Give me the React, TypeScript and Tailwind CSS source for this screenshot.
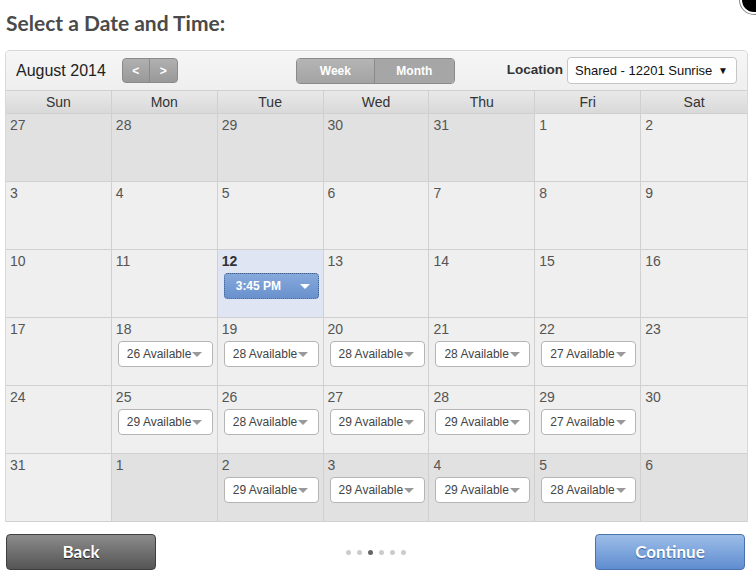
import React from "react";

// ── Data ──────────────────────────────────────────────────────

type Day = {
  n: number;
  other?: boolean;
  today?: boolean;
  avail?: number;
  time?: string;
};

const weeks: Day[][] = [
  [
    { n: 27, other: true },
    { n: 28, other: true },
    { n: 29, other: true },
    { n: 30, other: true },
    { n: 31, other: true },
    { n: 1 },
    { n: 2 },
  ],
  [{ n: 3 }, { n: 4 }, { n: 5 }, { n: 6 }, { n: 7 }, { n: 8 }, { n: 9 }],
  [
    { n: 10 },
    { n: 11 },
    { n: 12, today: true, time: "3:45 PM" },
    { n: 13 },
    { n: 14 },
    { n: 15 },
    { n: 16 },
  ],
  [
    { n: 17 },
    { n: 18, avail: 26 },
    { n: 19, avail: 28 },
    { n: 20, avail: 28 },
    { n: 21, avail: 28 },
    { n: 22, avail: 27 },
    { n: 23 },
  ],
  [
    { n: 24 },
    { n: 25, avail: 29 },
    { n: 26, avail: 28 },
    { n: 27, avail: 29 },
    { n: 28, avail: 29 },
    { n: 29, avail: 27 },
    { n: 30 },
  ],
  [
    { n: 31 },
    { n: 1, other: true },
    { n: 2, other: true, avail: 29 },
    { n: 3, other: true, avail: 29 },
    { n: 4, other: true, avail: 29 },
    { n: 5, other: true, avail: 28 },
    { n: 6, other: true },
  ],
];

const dayNames = ["Sun", "Mon", "Tue", "Wed", "Thu", "Fri", "Sat"];

// ── Pieces ────────────────────────────────────────────────────

function Caret({ className }: { className?: string }) {
  return (
    <svg width="10" height="5" viewBox="0 0 10 5" className={className}>
      <path d="M0 0 L10 0 L5 5 Z" fill="currentColor" />
    </svg>
  );
}

function AvailButton({ count }: { count: number }) {
  return (
    <div className="mt-[3px] ml-[6px] flex h-[26px] w-[95px] items-center rounded-[4px] border border-[#b5b5b5] bg-white pl-[8px] text-[12px] text-[#444]">
      <span>{count} Available</span>
      <Caret className="ml-[1px] text-[#999]" />
    </div>
  );
}

function TimeButton({ label }: { label: string }) {
  return (
    <div className="mt-[3px] ml-[6px] flex h-[26px] w-[95px] items-center justify-between rounded-[4px] border border-dotted border-[#3c5c8c] bg-gradient-to-b from-[#86a9dc] to-[#6a91cd] pl-[11px] pr-[8px] text-[12px] font-bold text-white">
      <span>{label}</span>
      <Caret className="text-white" />
    </div>
  );
}

function Cell({ d, col }: { d: Day; col: number }) {
  const bg = d.today ? "bg-[#dfe5f3]" : d.other ? "bg-[#e1e1e1]" : "bg-[#efefef]";
  return (
    <div
      className={`h-[68px] border-b border-[#d0d0d0] ${col < 6 ? "border-r" : ""} ${bg}`}
    >
      <div
        className={`pt-[3px] pl-[4px] text-[14px] leading-[17px] ${
          d.today ? "font-bold text-[#333]" : "text-[#555]"
        }`}
      >
        {d.n}
      </div>
      {d.avail !== undefined && <AvailButton count={d.avail} />}
      {d.time && <TimeButton label={d.time} />}
    </div>
  );
}

// ── App ───────────────────────────────────────────────────────

export default function App() {
  return (
    <div className="relative h-[576px] w-[756px] overflow-hidden bg-white font-['Liberation_Sans',Arial,sans-serif]">
      {/* close button peeking from the corner */}
      <div className="absolute -top-[14px] -right-[12px] h-[28px] w-[28px] rounded-full border-2 border-white bg-black shadow-[0_0_0_1px_#888]" />

      <h1 className="pt-[9px] pl-[6px] font-['Lato',sans-serif] text-[21px] font-bold leading-[28px] text-[#4a4a4a]">
        Select a Date and Time:
      </h1>

      <div className="mt-[13px] ml-[5px] w-[743px] overflow-hidden rounded-t-[5px] border border-b-0 border-[#d8d8d8]">
        {/* toolbar */}
        <div className="flex h-[39px] items-center bg-gradient-to-b from-[#f6f6f6] to-[#efefef] pr-[10px] pl-[10px]">
          <div className="text-[16px] text-[#222]">August 2014</div>
          <div className="ml-[16px] flex h-[25px] overflow-hidden rounded-[4px] border border-[#8a8a8a] bg-gradient-to-b from-[#b0b0b0] to-[#999] text-[12px] font-bold text-white">
            <div className="flex w-[27px] items-center justify-center border-r border-[#8a8a8a]">&lt;</div>
            <div className="flex w-[27px] items-center justify-center">&gt;</div>
          </div>

          <div className="ml-[118px] flex h-[26px] overflow-hidden rounded-[4px] border border-[#8a8a8a] text-[12px] font-bold text-white">
            <div className="flex w-[78px] items-center justify-center border-r border-[#8a8a8a] bg-gradient-to-b from-[#b5b5b5] to-[#a3a3a3]">
              Week
            </div>
            <div className="flex w-[79px] items-center justify-center bg-[#a6a6a6]">Month</div>
          </div>

          <div className="ml-auto flex items-center">
            <span className="text-[13.5px] font-bold text-[#333]">Location</span>
            <div className="ml-[4px] flex h-[27px] w-[170px] items-center justify-between rounded-[4px] border border-[#c6c6c6] bg-white pl-[7px] pr-[8px] text-[13px] text-[#111]">
              <span>Shared - 12201 Sunrise</span>
              <span className="text-[10px]">▼</span>
            </div>
          </div>
        </div>

        {/* weekday header */}
        <div className="grid h-[24px] grid-cols-7 border-y border-[#d0d0d0] bg-gradient-to-b from-[#e9e9e9] to-[#d9d9d9]">
          {dayNames.map((n, i) => (
            <div
              key={n}
              className={`flex items-center justify-center text-[14px] text-[#333] ${i < 6 ? "border-r border-[#d0d0d0]" : ""}`}
            >
              {n}
            </div>
          ))}
        </div>

        {/* month grid */}
        <div className="grid grid-cols-7">
          {weeks.map((w, wi) =>
            w.map((d, i) => <Cell key={`${wi}-${i}`} d={d} col={i} />)
          )}
        </div>
      </div>

      {/* footer */}
      <div className="mt-[12px] flex items-center pl-[6px] pr-[11px]">
        <button className="flex h-[36px] w-[150px] items-center justify-center rounded-[4px] border border-[#3f3f3f] bg-gradient-to-b from-[#8c8c8c] to-[#555] font-['Lato',serif] text-[17px] font-bold text-white [text-shadow:0_1px_1px_#222]">
          Back
        </button>
        <div className="flex flex-1 items-center justify-center gap-[6px]">
          {[0, 1, 2, 3, 4, 5].map((i) => (
            <span
              key={i}
              className={`h-[5px] w-[5px] rounded-full ${i === 2 ? "bg-[#666]" : "bg-[#ccc]"}`}
            />
          ))}
        </div>
        <button className="flex h-[36px] w-[150px] items-center justify-center rounded-[4px] border border-[#4a72ad] bg-gradient-to-b from-[#9dbde8] to-[#5f8dd0] font-['Lato',serif] text-[17px] font-bold text-white [text-shadow:0_1px_1px_#3a5f99]">
          Continue
        </button>
      </div>
    </div>
  );
}
